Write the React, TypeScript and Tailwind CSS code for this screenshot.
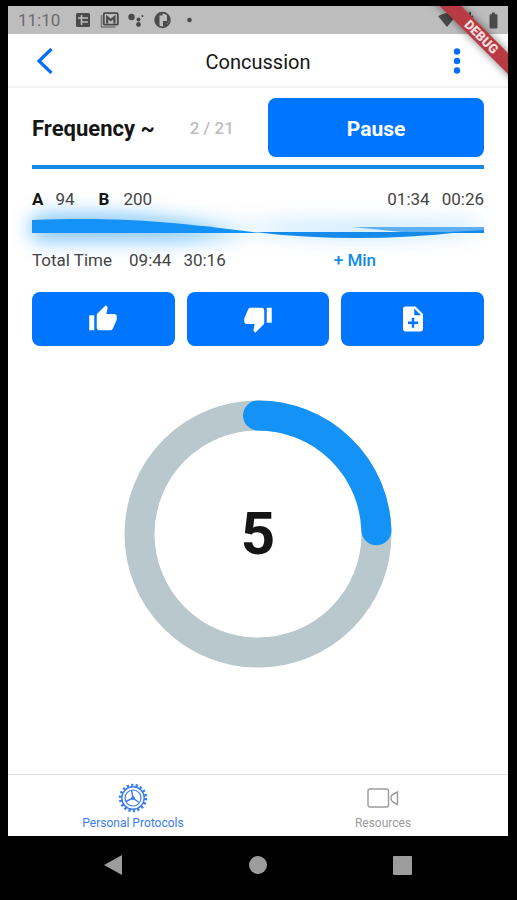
import React, { useState } from 'react';
import { MdBatteryFull, MdNoteAdd, MdSignalWifi4Bar, MdThumbDown, MdThumbUp } from 'react-icons/md';

const ACTIONS = [
  { label: 'Like', icon: MdThumbUp },
  { label: 'Dislike', icon: MdThumbDown },
  { label: 'Add note', icon: MdNoteAdd },
];

const StatusBar: React.FC = () => (
  <div className="flex h-7 items-center bg-[#bdbdbd] pl-[10px] pr-[5px] text-[#4a4a4a]">
    <span className="w-[58px] text-[17px] leading-none text-[#6b6b6b]">11:10</span>
    <svg width="118" height="20" viewBox="0 0 118 20" fill="currentColor" aria-hidden="true">
      {/* Table */}
      <rect x="0" y="3" width="14" height="14" rx="1.5" />
      <path d="M5.5 5v10M2 8h10M6 12h6" stroke="#bdbdbd" strokeWidth="1.6" fill="none" />
      {/* Mail stack */}
      <path d="M25.5 5v12h14" fill="none" stroke="#777" strokeWidth="1.6" />
      <rect x="27.8" y="3.2" width="14" height="11.5" rx="1" fill="none" stroke="currentColor" strokeWidth="1.8" />
      <path d="M31.2 13.5V7l3.6 3 3.6-3v6.5" fill="none" stroke="currentColor" strokeWidth="2.2" />
      {/* Assistant */}
      <circle cx="55.5" cy="7" r="3.2" />
      <circle cx="62.5" cy="9.5" r="1.9" />
      <circle cx="62.5" cy="14.5" r="2.4" />
      <circle cx="66.5" cy="6" r="1.1" />
      {/* App badge */}
      <circle cx="86.5" cy="10" r="7.3" fill="none" stroke="currentColor" strokeWidth="1.8" />
      <path d="M86.5 3a7 7 0 0 0-3 13.3V5.5h3z" />
      <path d="M87 11h5.5l-2 4.5L87 16.5zM91 5l2.5 3v3H91z" />
      <circle cx="113.5" cy="10" r="2.3" />
    </svg>
    <div className="ml-auto flex items-center gap-[7px]">
      <MdSignalWifi4Bar size={18} />
      <svg width="14" height="18" viewBox="0 0 14 18" aria-hidden="true">
        <path d="M7 1v15M2 11l8-6" fill="none" stroke="currentColor" strokeWidth="2" />
      </svg>
      <MdBatteryFull size={19} />
    </div>
  </div>
);

const Wave: React.FC = () => (
  <svg
    className="block h-6 w-full overflow-visible"
    viewBox="0 0 452 24"
    preserveAspectRatio="none"
    aria-hidden="true"
  >
    <defs>
      <filter id="glow" x="-10%" y="-200%" width="120%" height="500%">
        <feGaussianBlur stdDeviation="10" />
      </filter>
    </defs>
    <g filter="url(#glow)" fill="#1492f5">
      <path d="M0 -1C75 -6 140 0 216 15L150 21H0z" opacity="0.6" />
      <path d="M190 8C270 22 370 22 440 13L452 4H260z" opacity="0.25" />
    </g>
    <path d="M320 9H452V15H380C360 13 340 11 320 9z" fill="#5eb0f3" />
    <path d="M400 15L452 12V15H400z" fill="#1488e8" />
    <path d="M0 2C80 -1 130 2 228 15H0z" fill="#1492f5" />
    <path d="M222 14C290 22 360 22 430 14z" fill="#148bea" />
  </svg>
);

const CountdownRing: React.FC<{ seconds: number; progress: number }> = ({ seconds, progress }) => (
  <svg
    className="mx-auto block w-[268px]"
    viewBox="0 0 268 268"
    role="img"
    aria-label={`${seconds} seconds left`}
  >
    <circle cx="134" cy="134" r="118.5" fill="none" stroke="#b8c8cc" strokeWidth="30" />
    <circle
      cx="134"
      cy="134"
      r="118.5"
      fill="none"
      stroke="#1492f5"
      strokeWidth="30"
      strokeLinecap="round"
      pathLength={1000}
      strokeDasharray={`${progress} 1000`}
      transform="rotate(-90 134 134)"
    />
    <text x="134" y="154" textAnchor="middle" className="fill-[#151515] text-[60px] font-bold">
      {seconds}
    </text>
  </svg>
);

const GearIcon: React.FC = () => (
  <svg width="30" height="30" viewBox="0 0 30 30" fill="none" stroke="currentColor" aria-hidden="true">
    <circle cx="15" cy="15" r="12.7" strokeWidth="3" strokeDasharray="2.2 2.233" />
    <circle cx="15" cy="15" r="11.2" strokeWidth="1.4" />
    <circle cx="15" cy="15" r="8" strokeWidth="1.2" />
    <path d="M15 15l-1.5-8M15 15l-7 3.5M15 15l6 4.5" strokeWidth="1.4" />
    <circle cx="15" cy="15" r="1.4" fill="currentColor" />
  </svg>
);

const VideoIcon: React.FC = () => (
  <svg width="32" height="30" viewBox="0 0 32 30" fill="none" stroke="currentColor" strokeWidth="1.4" aria-hidden="true">
    <rect x="1" y="6" width="20.5" height="18" rx="2" />
    <path d="M30.5 9v12.5l-3-1.5c-3-1.5-3.500-2.500-3.500-5s.5-3 3.5-4.5z" />
  </svg>
);

const App: React.FC = () => {
  const [paused, setPaused] = useState(false);

  return (
    <div className="flex min-h-screen flex-col bg-black pl-2 pr-[9px] pt-[6px] font-['Roboto',sans-serif]">
      <div className="relative flex flex-1 flex-col overflow-hidden bg-white">
        <StatusBar />

        <header className="grid h-[54px] grid-cols-[72px_1fr_72px] items-center border-b-2 border-[#f3f3f3]">
          <button aria-label="Back" className="flex justify-start pl-7 text-[#0a6cff]">
            <svg width="18" height="28" viewBox="0 0 18 28" fill="none" stroke="currentColor" strokeWidth="3.2" aria-hidden="true">
              <path d="M15.5 3L3 15l12.5 12" />
            </svg>
          </button>
          <h1 className="pt-1 text-center text-xl text-[#151515]">Concussion</h1>
          <button aria-label="More options" className="flex justify-center pr-[30px] text-[#0a6cff]">
            <svg width="8" height="28" viewBox="0 0 8 28" fill="currentColor" aria-hidden="true">
              <circle cx="4" cy="5.5" r="3.2" />
              <circle cx="4" cy="15" r="3.2" />
              <circle cx="4" cy="24.5" r="3.2" />
            </svg>
          </button>
        </header>

        <main className="flex-1 px-6 pt-[10px]">
          <div className="flex items-center">
            <h2 className="pt-[2px] text-[22px] font-bold text-[#151515]">Frequency ~</h2>
            <span className="ml-[35px] pt-[2px] text-[17px] font-medium text-[#bdbdbd]">2 / 21</span>
            <button
              onClick={() => setPaused(!paused)}
              className="ml-auto h-[59px] w-[216px] rounded-lg bg-[#0075ff] pt-1 text-[21px] font-bold text-white"
            >
              {paused ? 'Resume' : 'Pause'}
            </button>
          </div>

          <div className="mt-2 h-1 bg-[#148be8]" />

          <div className="relative z-10 mt-[18px] flex h-6 items-center pt-[2px] text-[17px] text-[#444]">
            <b className="text-[#151515]">A</b>
            <span className="ml-3">94</span>
            <b className="ml-6 text-[#151515]">B</b>
            <span className="ml-[14px]">200</span>
            <span className="ml-auto">01:34</span>
            <span className="ml-3">00:26</span>
          </div>

          <div className="mt-1 pt-[3px]">
            <Wave />
          </div>

          <div className="relative z-10 mt-[6px] flex h-6 items-center pt-[2px] text-[17px] text-[#444]">
            <span>Total Time</span>
            <span className="ml-[17px]">09:44</span>
            <span className="ml-3">30:16</span>
            <button className="ml-[108px] font-medium text-[#148be8]">+ Min</button>
          </div>

          <div className="mt-5 grid grid-cols-3 gap-3">
            {ACTIONS.map(({ label, icon: Icon }) => (
              <button
                key={label}
                aria-label={label}
                className="flex h-[54px] items-center justify-center rounded-lg bg-[#0075ff] text-white"
              >
                <Icon size={30} />
              </button>
            ))}
          </div>

          <div className="pt-[54px]">
            <CountdownRing seconds={5} progress={245} />
          </div>
        </main>

        <nav className="grid h-[62px] grid-cols-2 border-t border-[#dedede] text-xs leading-4">
          <a href="#protocols" className="flex flex-col items-center pt-2 text-[#3b7cf0]">
            <GearIcon />
            <span className="pt-[2px]">Personal Protocols</span>
          </a>
          <a href="#resources" className="flex flex-col items-center pt-2 text-[#9c9c9c]">
            <VideoIcon />
            <span className="pt-[2px]">Resources</span>
          </a>
        </nav>

        {/* Corner ribbon */}
        <div className="absolute right-[-32px] top-[22px] flex h-[15px] w-[120px] rotate-45 items-center justify-center bg-[#b83a42] pl-1 text-[13px] font-black leading-none text-[#f3dede] shadow-[0_0_8px_rgba(0,0,0,0.5)]">
          DEBUG
        </div>
      </div>

      {/* Android navigation */}
      <div className="flex h-16 items-center justify-center gap-[126px] pb-[6px] pr-[2px] text-[#9c9c9c]">
        <button aria-label="System back">
          <svg width="20" height="22" viewBox="0 0 20 22" fill="currentColor" aria-hidden="true">
            <path d="M19 1v20L1 11z" />
          </svg>
        </button>
        <button aria-label="Home" className="size-[18px] rounded-full bg-current" />
        <button aria-label="Recent apps" className="size-[19px] rounded-[1px] bg-current" />
      </div>
    </div>
  );
};

export default App;
